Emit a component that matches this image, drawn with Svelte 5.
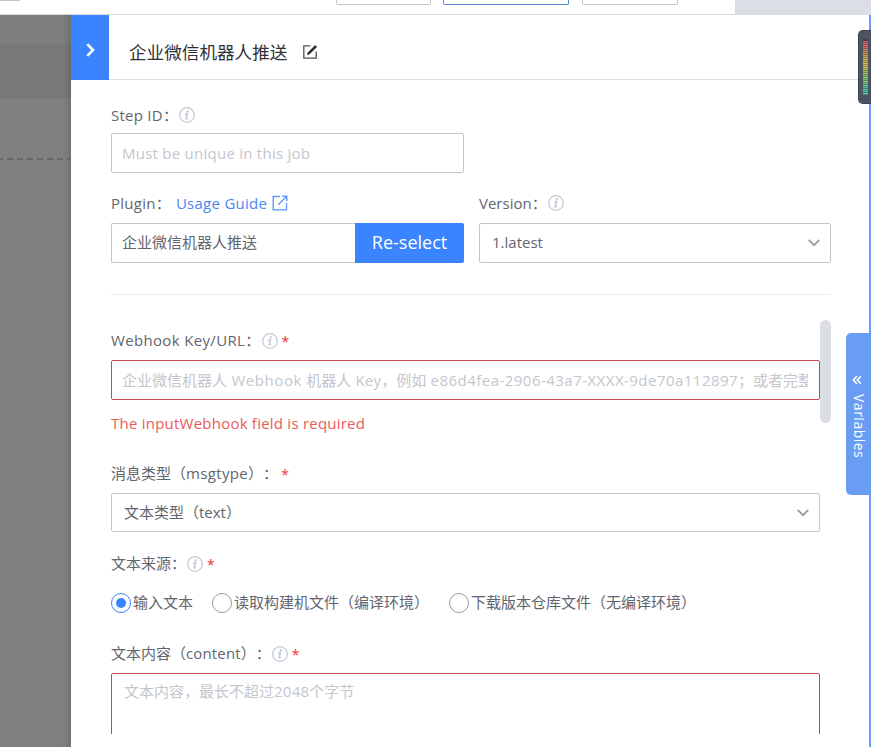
<script>
  const bars = [
    '#5b3440', '#c4606c', '#d4606a', '#d66868', '#cf6a60', '#d08060', '#c98a62', '#c4904c', '#d0a04a', '#cfa84a',
    '#d8b860', '#cfae3c', '#d0c050', '#c8b840', '#c6c852', '#b0b848', '#a4bc5c', '#a4c464', '#86b858', '#9ccc6c',
    '#70bc68', '#8cd080', '#68b878', '#70c890', '#48b48c', '#60c8a0', '#50b8a0', '#58c4b0'
  ];
  const radios = [
    { label: '输入文本', checked: true, gap: 19 },
    { label: '读取构建机文件（编译环境）', checked: false, gap: 20 },
    { label: '下载版本仓库文件（无编译环境）', checked: false, gap: 0 }
  ];
</script>

{#snippet info()}
  <svg class="info" width="16" height="16" viewBox="0 0 16 16">
    <circle cx="8" cy="8" r="7.3" fill="none" stroke="#c4cbd6" stroke-width="1.3" />
    <circle cx="8.7" cy="4.5" r="1.2" fill="#c4cbd6" />
    <path d="M6.1 7.1h2.3L7.2 11.7h1.7" fill="none" stroke="#c4cbd6" stroke-width="1.6" />
  </svg>
{/snippet}

{#snippet chevron()}
  <svg width="14" height="10" viewBox="0 0 14 10">
    <path d="M1.7 1.9 7 7.2l5.3-5.3" fill="none" stroke="#979ba5" stroke-width="1.8" />
  </svg>
{/snippet}

<div class="page">
  <div class="topbar">
    <div class="crumb"></div>
    <div class="buttons">
      <div class="btn"></div>
      <div class="btn primary"></div>
      <div class="btn"></div>
    </div>
    <div class="corner"></div>
  </div>

  <div class="main">
    <div class="backdrop">
      <div class="tier one"></div>
      <div class="tier two"></div>
      <div class="tier three"><div class="dash"></div></div>
    </div>

    <section class="panel">
      <header>
        <div class="toggle">
          <svg width="12" height="16" viewBox="0 0 12 16">
            <path d="M2.3 2.2 8 8l-5.7 5.8" fill="none" stroke="#fff" stroke-width="2.6" />
          </svg>
        </div>
        <h1>企业微信机器人推送</h1>
        <svg width="16" height="16" viewBox="0 0 16 16">
          <path d="M8.5 1.8H1.8v12.4h12.4V7.6" fill="none" stroke="#50535b" stroke-width="1.3" />
          <path d="M5 11.2l.7-2.8 7.5-7.3 1.8 1.8-7.4 7.4z" fill="#313238" />
        </svg>
      </header>

      <div class="body">
        <div class="label step"><span class="t1">Step ID：</span>{@render info()}</div>
        <div class="input half"><span class="placeholder t2">Must be unique in this job</span></div>

        <div class="cols">
          <div class="col">
            <div class="label second">
              <span class="t1">Plugin：</span>
              <span class="link">Usage Guide</span>
              <svg width="16" height="16" viewBox="0 0 16 16">
                <path d="M8 1.5H1.2v13.3h13.3V8M10 1.2h4.8V6M14.5 1.5 6.3 9.7" fill="none" stroke="#5b94f7" stroke-width="1.3" />
              </svg>
            </div>
            <div class="picker">
              <div class="input"><span class="up">企业微信机器人推送</span></div>
              <div class="reselect"><span class="up">Re-select</span></div>
            </div>
          </div>
          <div class="col">
            <div class="label second"><span>Version：</span>{@render info()}</div>
            <div class="input select"><span class="up">1.latest</span>{@render chevron()}</div>
          </div>
        </div>

        <div class="divider"></div>

        <div class="scroll">
          <div class="fields">
            <div class="label f1"><span class="t4 up">Webhook Key/URL：</span>{@render info()}<i>*</i></div>
            <div class="input bad">
              <span class="placeholder clip">企业微信机器人<b class="a">{' Webhook '}</b>机器人<b class="b">{' Key'}</b>，例如<b class="c">{' e86d4fea-2906-43a7-XXXX-9de70a112897'}</b>；或者完整</span>
            </div>
            <div class="error"><span>The inputWebhook field is required</span></div>
            <div class="label f2"><span class="up">消息类型（<b class="d">msgtype</b>）：</span><i class="near">*</i></div>
            <div class="input select low"><span class="up">文本类型（text）</span>{@render chevron()}</div>
            <div class="label f3"><span class="up">文本来源：</span>{@render info()}<i>*</i></div>
            <div class="radios">
              {#each radios as r}
                <div class="radio" style="margin-right:{r.gap}px">
                  <div class="ring" class:checked={r.checked}></div>
                  <span class="up">{r.label}</span>
                </div>
              {/each}
            </div>
            <div class="label f4"><span class="up">文本内容（<b class="f">content</b>）：</span>{@render info()}<i>*</i></div>
            <div class="area"><span class="placeholder">文本内容，最长不超过<b class="g">2048</b>个字节</span></div>
          </div>
          <div class="track"><div class="thumb"></div></div>
        </div>
      </div>
    </section>
    <div class="edge"></div>
  </div>

  <div class="variables">
    <svg width="10" height="10" viewBox="0 0 10 10">
      <path d="M4.8 1.2 1.4 5l3.4 3.8M8.8 1.2 5.4 5l3.4 3.8" fill="none" stroke="#fff" stroke-width="1.6" />
    </svg>
    <span>Variables</span>
  </div>
  <div class="meter">
    {#each bars as c}
      <div style="background:{c}"></div>
    {/each}
  </div>
</div>

<style>
  * { box-sizing: border-box; }
  .page {
    position: relative; width: 871px; height: 747px; overflow: hidden; background: #fff;
    display: flex; flex-direction: column;
    font: 15px/20px "Open Sans", "Noto Sans CJK SC", sans-serif; color: #63656e;
    text-spacing-trim: space-all;
  }
  svg { display: block; flex: none; }
  span, h1 { white-space: nowrap; }
  b { font-weight: 400; white-space: pre; }
  .up { margin-bottom: 2px; }
  .t1, .t2 { letter-spacing: .25px; }
  .t4 { letter-spacing: .34px; }
  .a { letter-spacing: .55px; }
  .b { letter-spacing: .2px; }
  .c { letter-spacing: .47px; }
  .d { letter-spacing: .35px; }
  .f { letter-spacing: .14px; }
  .g { letter-spacing: .25px; }
  .topbar { height: 15px; flex: none; display: flex; border-bottom: 1px solid #d8dade; }
  .crumb { width: 20px; height: 1px; background: #c4c6cc; }
  .buttons { width: 715px; padding-left: 316px; display: flex; align-items: flex-start; }
  .btn { width: 95px; height: 5px; border: 1px solid #c4c6cc; border-top: 0; border-radius: 0 0 2px 2px; }
  .btn.primary { width: 126px; margin: 0 13px 0 12px; border-color: #5286cb; }
  .btn:last-child { width: 96px; }
  .corner { flex: 1; height: 15px; background: #dcdee5; }
  .main { flex: 1; display: flex; min-height: 0; }
  .backdrop { width: 71px; display: flex; flex-direction: column; }
  .tier { box-shadow: inset -7px 0 6px -5px rgba(0,0,0,.16); }
  .tier.one { height: 30px; background: #7d7e7f; }
  .tier.two { height: 53px; background: #78787b; }
  .tier.three { flex: 1; background: #808080; padding-top: 60px; }
  .dash { height: 2px; background: repeating-linear-gradient(90deg, #64676c 0 6px, transparent 6px 10px); background-position-x: -3px; }
  .panel { width: 798px; display: flex; flex-direction: column; background: #fff; }
  .edge { width: 2px; background: #699df4; }
  header { height: 65px; flex: none; display: flex; align-items: center; border-bottom: 1px solid #dcdee5; }
  .toggle { width: 38px; height: 65px; margin-bottom: -1px; padding: 5px 0 0 1px; background: #3a84ff; display: flex; align-items: center; justify-content: center; }
  h1 { margin: 9px 15px 0 20px; font-size: 17.6px; line-height: 24px; font-weight: 400; color: #313238; }
  header > svg { margin-top: 10px; }
  .body { flex: 1; min-height: 0; padding: 0 38px 13px 40px; display: flex; flex-direction: column; }
  .label { display: flex; align-items: center; height: 20px; flex: none; }
  .label i { font-style: normal; font-size: 14px; color: #ea3636; margin-left: 4px; position: relative; top: 1px; }
  .label i.near { margin-left: 3px; }
  .info { margin-left: 1px; }
  .step { margin: 25px 0 8px; }
  .input { height: 40px; flex: none; border: 1px solid #c4c6cc; border-radius: 2px; padding: 0 10px; display: flex; align-items: center; min-width: 0; }
  .half { width: 353px; }
  .placeholder { color: #c4c6cc; }
  .cols { display: flex; gap: 15px; margin-top: 20px; }
  .cols .col:first-child { width: 353px; }
  .cols .col:last-child { width: 352px; }
  .second { margin-bottom: 10px; }
  .link { color: #4a86f0; margin: 0 5px 0 5px; letter-spacing: .27px; }
  .picker { display: flex; }
  .picker .input { width: 244px; border-right: 0; border-radius: 2px 0 0 2px; }
  .reselect { width: 109px; height: 40px; border-radius: 0 2px 2px 0; background: #3a84ff; color: #fff; display: flex; align-items: center; justify-content: center; font-size: 18px; }
  .select { justify-content: space-between; padding: 0 9px 0 12px; }
  .low { height: 39px; }
  .divider { height: 1px; flex: none; background: #ebedf0; margin-top: 31px; }
  .scroll { flex: 1; min-height: 0; margin-top: 25px; display: flex; }
  .fields { width: 709px; overflow: hidden; display: flex; flex-direction: column; }
  .track { width: 11px; }
  .thumb { height: 103px; border-radius: 6px; background: #dcdee5; }
  .f1 { margin: 11px 0 9px; }
  .bad { border-color: #c4484d; }
  .clip { width: 686px; overflow: hidden; }
  .error { height: 20px; margin-top: 13px; color: #ea5a5a; flex: none; letter-spacing: .23px; }
  .f2 { margin: 31px 0 9px; }
  .f3 { margin: 22px 0 18px; }
  .radios { display: flex; height: 22px; align-items: center; flex: none; }
  .radio { display: flex; align-items: center; gap: 2px; }
  .ring { width: 20px; height: 20px; border: 1px solid #979ba5; border-radius: 50%; display: flex; align-items: center; justify-content: center; }
  .ring.checked { border-color: #3a84ff; }
  .ring.checked::after { content: ""; width: 10px; height: 10px; border-radius: 50%; background: #3a84ff; }
  .f4 { margin: 30px 0 9px; }
  .area { flex: none; height: 100px; border: 1px solid #c4484d; border-radius: 2px; padding: 7px 12px; }
  .variables {
    position: absolute; left: 846px; top: 333px; width: 25px; height: 162px; background: #699df4; border-radius: 5px 0 0 5px;
    display: flex; flex-direction: column; align-items: center; padding: 42px 3px 0 0; gap: 9px; color: #fff;
  }
  .variables span { writing-mode: vertical-rl; font-size: 14px; margin-left: 3px; letter-spacing: .5px; }
  .meter { position: absolute; left: 858px; top: 30px; width: 14px; height: 74px; border-radius: 5px 0 0 5px; background: #4d5363; border: 1px solid #3d4250; border-right: 0; padding: 8px 2px 0 4px; display: flex; flex-direction: column; }
  .meter div { width: 5px; height: 2px; flex: none; box-shadow: inset 0 -1px rgba(50,55,70,.4); }
</style>
